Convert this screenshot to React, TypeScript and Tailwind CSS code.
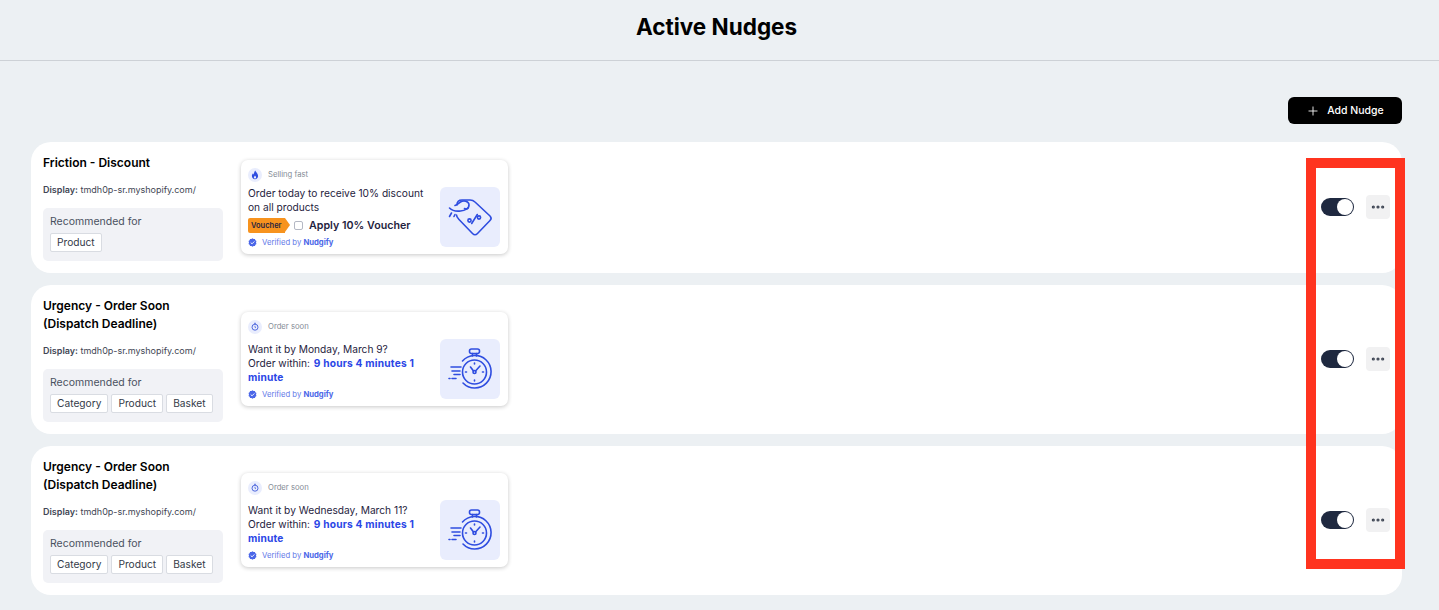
import React from "react";
import { Plus, MoreHorizontal } from "lucide-react";

function Flame() {
  return (
    <svg viewBox="0 0 14 14" className="w-[14px] h-[14px]">
      <circle cx="7" cy="7" r="7" fill="#e9edfd" />
      <path d="M7.2 2.6c.3 1.5 2.9 2.7 2.9 5.4 0 1.9-1.4 3.2-3.1 3.2S3.9 9.9 3.9 8c0-1.2.6-2.1 1.2-2.7.1.7.4 1.1.8 1.3 0-1.4.4-2.9 1.3-4z" fill="#2f4de0" />
      <path d="M7 7.4c.2.6 1.1 1 1.1 2 0 .7-.5 1.2-1.1 1.2s-1.1-.5-1.1-1.2c0-.8.8-1.2 1.1-2z" fill="#e9edfd" />
    </svg>
  );
}

function Clock() {
  return (
    <svg viewBox="0 0 14 14" className="w-[14px] h-[14px]" fill="none">
      <circle cx="7" cy="7" r="7" fill="#e9edfd" />
      <circle cx="7" cy="7.2" r="3" stroke="#3f5bd9" strokeWidth="0.9" />
      <path d="M6 3.3h2M7 5.8v1.5l.9.5" stroke="#3f5bd9" strokeWidth="0.8" />
    </svg>
  );
}

function Verified() {
  return (
    <svg viewBox="0 0 10 10" className="w-[9px] h-[9px] shrink-0 -mt-[1px]">
      <path d="M5 .4l1.2.8 1.5-.1.5 1.4 1.2.9-.5 1.6.5 1.6-1.2.9-.5 1.4-1.5-.1L5 9.6l-1.2-.8-1.5.1-.5-1.4L.6 6.6 1.1 5 .6 3.4l1.2-.9.5-1.4 1.5.1z" fill="#4a66e8" />
      <path d="M3 5l1.5 1.5L7.1 3.8" fill="none" stroke="#fff" strokeWidth="1" />
    </svg>
  );
}

function TagArt() {
  return (
    <svg viewBox="0 0 60 60" className="w-[60px] h-[60px]" fill="none" stroke="#2f4de0" strokeWidth="1.6" strokeLinecap="round" strokeLinejoin="round">
      <path d="M17 18c0-3 2-5 5-5h8c2 0 3.500.5 5 2L50 29c1.500 1.500 1.500 3 0 4.500L37.500 46.500c-1.500 1.500-3.500 1.500-5 0L19 32.500c-1.500-1.500-2.500-3-2.500-4.500" />
      <path d="M9.500 21c3 3 7 3.500 11 3 4-.5 9-2.500 8.500-6.500-.4-3.500-5.500-4.500-8.500-2.500-2 1.300-3.500 3-5.500 3.500" />
      <path d="M24.500 21.500c1.500 1 3 .5 3.800-.7" />
      <path d="M11.500 26l-2 3.500M15 27.500l-1 2" />
      <circle cx="29.500" cy="33.500" r="1.600" />
      <circle cx="39" cy="30.500" r="1.600" />
      <path d="M37.300 27.500L31.700 36.500" />
    </svg>
  );
}

function WatchArt() {
  return (
    <svg viewBox="0 0 60 60" className="w-[60px] h-[60px]" fill="none" stroke="#2f4de0" strokeWidth="1.6" strokeLinecap="round" strokeLinejoin="round">
      <path d="M22.500 22a16.300 16.300 0 1 1 .5 22" />
      <circle cx="34.500" cy="33" r="12" />
      <rect x="29.500" y="10" width="10" height="4.500" rx="2" />
      <path d="M32.500 14.500v2.500M36.500 14.500v2.500" />
      <circle cx="34.500" cy="33" r="1.500" />
      <path d="M35.500 32l4.500-5M33.500 32l-3-4" />
      <path d="M34.500 24v1M34.500 41v1M25.500 33h1M42.500 33h1" />
      <path d="M11 28h10M12 32h8M14 35.500h6M9 39.500h1M12 39.500h4" />
    </svg>
  );
}

function Preview({ icon, label, art, children }: { icon: React.ReactNode; label: string; art: React.ReactNode; children: React.ReactNode }) {
  return (
    <div className="w-[267px] h-[94px] mb-[1px] bg-white rounded-[7px] shadow-[0_1px_4px_rgba(0,0,0,0.22)] pl-[7px] pr-2 pt-2 flex flex-col shrink-0">
      <div className="h-[14px] flex items-center gap-[6px]">
        {icon}
        <span className="text-[7.700px] text-[#858c96]">{label}</span>
      </div>
      <div className="mt-[5px] flex justify-between h-[60px]">
        <div className="w-[185px] h-[61px] flex flex-col">
          <div className="flex-1 min-h-0 flex flex-col justify-center text-[10.200px] leading-[14px] text-[#1f2340]">{children}</div>
          <div className="h-[10px] shrink-0 flex items-center gap-[5px] text-[7.700px] text-[#5f78e8]">
            <Verified />
            <span>
              Verified by <span className="font-bold text-[#4a66e8]">Nudgify</span>
            </span>
          </div>
        </div>
        <div className="w-[60px] h-[60px] rounded-[6px] bg-[#e9edfd]">{art}</div>
      </div>
    </div>
  );
}

function VoucherBody() {
  return (
    <>
      <div className="shrink-0">Order today to receive 10% discount</div>
      <div className="shrink-0">on all products</div>
      <div className="shrink-0 mt-1 mb-[6px] h-[15px] flex items-center">
        <span className="relative h-[15px] w-[37px] bg-[#f7931e] rounded-l-[2px] text-[7.500px] leading-[15px] font-semibold text-[#1f2340] pl-[3px]">
          Voucher
          <span className="absolute left-full top-0 border-y-[7.500px] border-y-transparent border-l-[5px] border-l-[#f7931e]" />
        </span>
        <span className="ml-[9px] w-[9px] h-[9px] rounded-[2px] border border-[#b4b8c4] bg-white" />
        <span className="ml-[6px] text-[10.700px] font-semibold">Apply 10% Voucher</span>
      </div>
    </>
  );
}

function SoonBody({ date }: { date: string }) {
  return (
    <div className="mb-[3px]">
      <div>Want it by {date}?</div>
      <div>
        Order within: <span className="ml-px tracking-[0.2px] font-bold text-[#2b46e6]">9 hours 4 minutes 1 minute</span>
      </div>
    </div>
  );
}

function Row({ title, tags, preview }: { title: React.ReactNode; tags: string[]; preview: React.ReactNode }) {
  return (
    <div className="bg-white rounded-[20px] flex items-center px-3 py-3">
      <div className="w-[180px] shrink-0 mr-[18px]">
        <div className="text-[12px] leading-[18px] font-semibold text-black">{title}</div>
        <div className="mt-[9px] text-[9px] leading-[18px] text-[#3f4654]">
          <span className="font-semibold">Display:</span> tmdh0p-sr.myshopify.com/
        </div>
        <div className="mt-[9px] bg-[#f1f2f6] rounded-[5px] h-[53px] px-[7px] pt-[6px]">
          <div className="text-[10.500px] leading-[16px] text-[#4a5160]">Recommended for</div>
          <div className="mt-[3px] flex gap-[3px]">
            {tags.map((t) => (
              <span key={t} className="h-[19px] px-[6px] bg-white border border-[#d9dce2] rounded-[2px] text-[10.200px] leading-[17px] text-[#333a48]">
                {t}
              </span>
            ))}
          </div>
        </div>
      </div>
      {preview}
      <div className="ml-auto mb-[1px] flex items-center gap-3">
        <div className="w-[33px] h-[18px] rounded-full bg-[#1f2940] relative">
          <span className="absolute right-[1px] top-[1px] w-4 h-4 rounded-full bg-white" />
        </div>
        <div className="w-6 h-6 rounded-[4px] bg-[#f1f1f2] flex items-center justify-center">
          <MoreHorizontal size={16} strokeWidth={2.800} className="text-[#3f4654]" />
        </div>
      </div>
    </div>
  );
}

export default function App() {
  const t2 = (
    <>
      Urgency - Order Soon
      <br />
      (Dispatch Deadline)
    </>
  );
  return (
    <div className="relative h-[610px] overflow-hidden bg-[#ecf0f3] font-['Inter',sans-serif]">
      <header className="h-[61px] border-b border-[#cdd1d6] pr-[6px] flex items-center justify-center">
        <h1 className="text-[22.500px] font-bold text-black -mt-[7px]">Active Nudges</h1>
      </header>
      <main className="pl-[31px] pr-[37px] pt-[36px]">
        <div className="flex justify-end mb-[18px]">
          <button className="w-[114px] h-[27px] rounded-[6px] bg-black text-white flex items-center justify-center gap-[7px] text-[10.500px] font-medium">
            <Plus size={14} strokeWidth={1.500} />
            Add Nudge
          </button>
        </div>
        <div className="flex flex-col gap-3">
          <Row title="Friction - Discount" tags={["Product"]} preview={<Preview icon={<Flame />} label="Selling fast" art={<TagArt />}><VoucherBody /></Preview>} />
          <Row title={t2} tags={["Category", "Product", "Basket"]} preview={<Preview icon={<Clock />} label="Order soon" art={<WatchArt />}><SoonBody date="Monday, March 9" /></Preview>} />
          <Row title={t2} tags={["Category", "Product", "Basket"]} preview={<Preview icon={<Clock />} label="Order soon" art={<WatchArt />}><SoonBody date="Wednesday, March 11" /></Preview>} />
        </div>
      </main>
      <div className="absolute left-[1306px] top-[158px] w-[99px] h-[411px] border-[10px] border-[#ff341f] pointer-events-none" />
    </div>
  );
}
